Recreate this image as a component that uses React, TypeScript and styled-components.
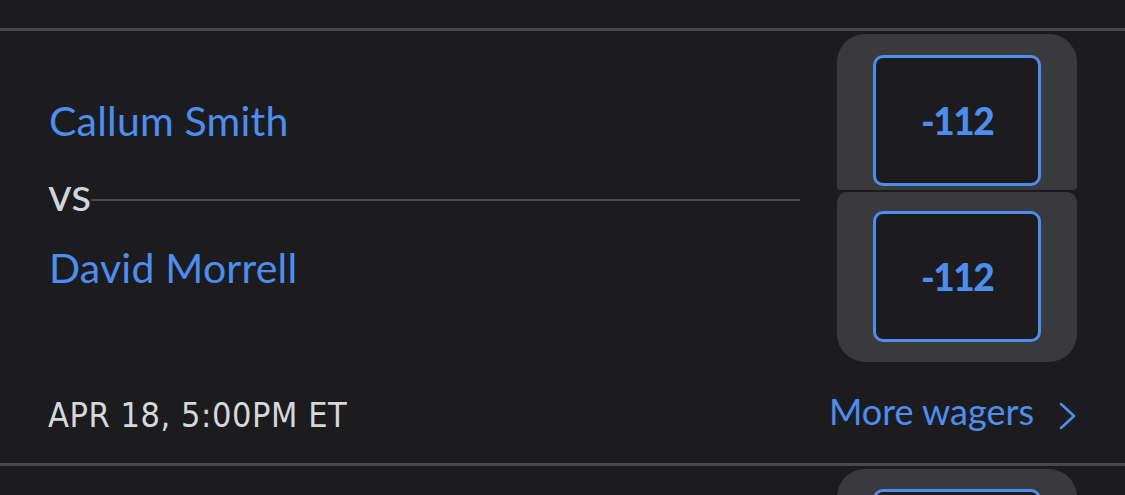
import React from "react";
import styled, { createGlobalStyle } from "styled-components";

const GlobalStyle = createGlobalStyle`
  html, body {
    margin: 0;
    padding: 0;
    background: #1c1c1e;
  }
  body {
    font-family: "Lato", "Open Sans", sans-serif;
  }
`;

const Page = styled.div`
  width: 1125px;
  height: 495px;
  overflow: hidden;
  background: #1c1c1e;
  padding-top: 28px;
  box-sizing: border-box;
`;

const Divider = styled.div`
  height: 3px;
  background: #48484b;
`;

const Card = styled.div`
  display: flex;
  flex-direction: column;
  height: 432px;
  padding: 0 48px 0 49px;
`;

const Main = styled.div`
  display: flex;
  height: 332px;
`;

const Fighters = styled.div`
  flex: 1;
  display: flex;
  flex-direction: column;
  padding-top: 66px;
`;

const Name = styled.div`
  font-size: 41px;
  line-height: 48px;
  color: #4b8ef0;
  letter-spacing: 0.2px;
`;

const VsRow = styled.div`
  display: flex;
  align-items: center;
  height: 48px;
  margin: 25px 0 26px;
`;

const Vs = styled.span`
  font-size: 46px;
  line-height: 48px;
  color: #d2d5d9;
  margin-left: -1px;
`;

const Rule = styled.div`
  flex: 1;
  height: 2px;
  background: #48484b;
  margin-top: 12px;
`;

const Odds = styled.div`
  width: 240px;
  margin: 3px 0 0 37px;
  display: flex;
  flex-direction: column;
  gap: 2px;
`;

const OddsCell = styled.div<{ $pos: "top" | "bottom" | "peek" }>`
  display: flex;
  justify-content: center;
  background: #3a3a3d;
  border-radius: ${(p) =>
    p.$pos === "top" ? "28px 28px 4px 4px" : p.$pos === "bottom" ? "10px 10px 28px 28px" : "28px 28px 0 0"};
  padding: ${(p) => (p.$pos === "top" ? "21px 0 4px" : p.$pos === "bottom" ? "19px 0 20px" : "20px 0 0")};
`;

const OddsButton = styled.button`
  width: 168px;
  height: 131px;
  box-sizing: border-box;
  border: 3px solid #4b8ef0;
  border-radius: 10px;
  background: #1c1c1e;
  color: #4b8ef0;
  font-family: "Lato", sans-serif;
  font-weight: 900;
  font-size: 37px;
  letter-spacing: -1.5px;
  padding: 0;
  cursor: pointer;
`;

const Footer = styled.div`
  flex: 1;
  display: flex;
  align-items: flex-start;
  justify-content: space-between;
  padding-top: 32px;
`;

const DateText = styled.span`
  font-family: "DejaVu Sans", sans-serif;
  font-stretch: condensed;
  font-size: 34px;
  line-height: 40px;
  letter-spacing: 0.55px;
  color: #d6d7db;
  margin-left: -1px;
`;

const MoreLink = styled.a`
  display: flex;
  align-items: flex-start;
  gap: 24px;
  margin-top: -4px;
  font-size: 36px;
  line-height: 40px;
  color: #4b8ef0;
  text-decoration: none;
  cursor: pointer;

  svg {
    margin-top: 11px;
  }
`;

const PeekCard = styled.div`
  display: flex;
  justify-content: flex-end;
  padding: 3px 48px 0 0;
`;

const PeekOdds = styled.div`
  width: 240px;
`;

const Chevron = () => (
  <svg width="19" height="28" viewBox="0 0 19 28" fill="none">
    <polyline points="3,2 16,14 3,26" stroke="#4b8ef0" strokeWidth="2.6" strokeLinecap="round" strokeLinejoin="round" />
  </svg>
);

export default function App() {
  return (
    <>
      <GlobalStyle />
      <Page>
        <Divider />
        <Card>
          <Main>
            <Fighters>
              <Name>Callum Smith</Name>
              <VsRow>
                <Vs>vs</Vs>
                <Rule />
              </VsRow>
              <Name>David Morrell</Name>
            </Fighters>
            <Odds>
              <OddsCell $pos="top">
                <OddsButton>-112</OddsButton>
              </OddsCell>
              <OddsCell $pos="bottom">
                <OddsButton>-112</OddsButton>
              </OddsCell>
            </Odds>
          </Main>
          <Footer>
            <DateText>APR 18, 5:00PM ET</DateText>
            <MoreLink>
              More wagers
              <Chevron />
            </MoreLink>
          </Footer>
        </Card>
        <Divider />
        <PeekCard>
          <PeekOdds>
            <OddsCell $pos="peek">
              <OddsButton />
            </OddsCell>
          </PeekOdds>
        </PeekCard>
      </Page>
    </>
  );
}
